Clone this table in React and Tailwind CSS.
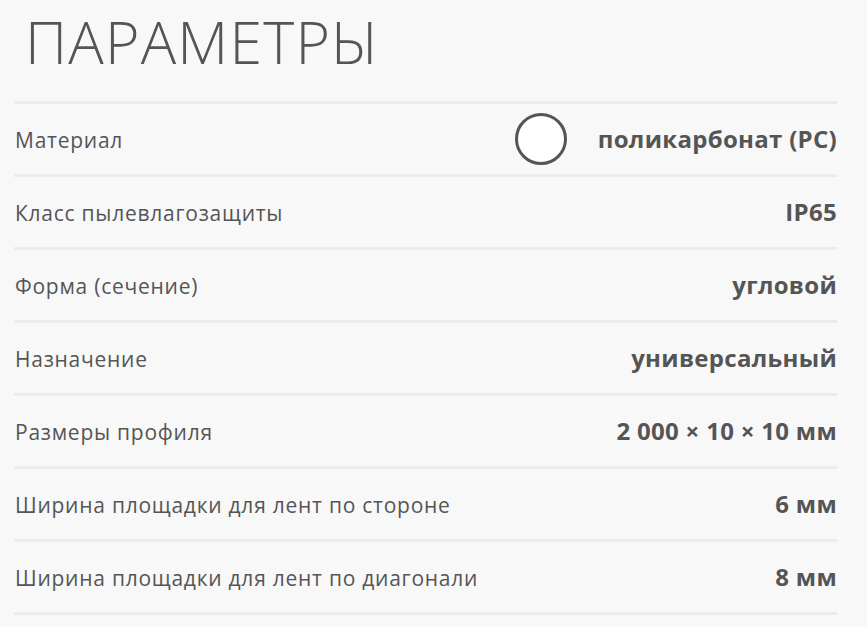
import React from "react";

const rows = [
  ["Материал", "поликарбонат (PC)", true],
  ["Класс пылевлагозащиты", "IP65"],
  ["Форма (сечение)", "угловой"],
  ["Назначение", "универсальный"],
  ["Размеры профиля", "2 000 × 10 × 10 мм"],
  ["Ширина площадки для лент по стороне", "6 мм"],
  ["Ширина площадки для лент по диагонали", "8 мм"],
];

export default function App() {
  return (
    <div className="w-[867px] h-[627px] bg-[#f8f8f8] text-[#555555] overflow-hidden" style={{ fontFamily: '"Open Sans", sans-serif' }}>
      <div className="w-[837px] pl-[14px]">
        <div className="h-[101px] pl-[11px] pt-[1px]">
          <h1 className="text-[59px] font-light leading-[80px] tracking-[1.2px]">ПАРАМЕТРЫ</h1>
        </div>
        {rows.map(([label, value, circle], i) => (
          <div
            key={i}
            className={
              "h-[73px] border-t-[3px] border-[#ececec] flex items-center justify-between pl-px " +
              (i === rows.length - 1 ? "border-b-[3px] h-[76px]" : "")
            }
          >
            <span className="text-[21px] tracking-[0.75px] pt-[3px]">{label}</span>
            <div className="flex items-center gap-[31px]">
              {circle && (
                <div className="w-[52px] h-[52px] rounded-full border-[3px] border-[#555555] bg-white" />
              )}
              <span className="text-[24px] font-bold tracking-[0.3px]">{value}</span>
            </div>
          </div>
        ))}
      </div>
    </div>
  );
}
